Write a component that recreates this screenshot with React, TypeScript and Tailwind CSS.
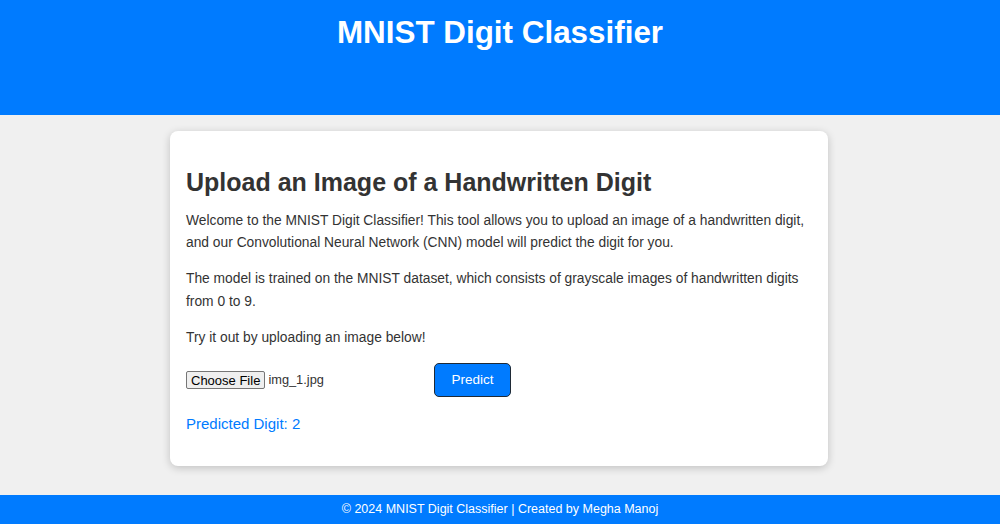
export default function App() {
  return (
    <div className="min-h-screen bg-[#f0f0f0] flex flex-col font-['Liberation_Sans',Arial,sans-serif] text-[#333]">
      {/* Header */}
      <header className="h-[115px] bg-[#007bff] text-white text-center pt-[14px]">
        <h1 className="text-[31.4px] font-bold leading-[37px]">MNIST Digit Classifier</h1>
      </header>

      {/* Main */}
      <main className="flex justify-center pt-4 pr-[2px]">
        <div className="w-[658px] h-[335px] bg-white rounded-lg shadow-[0_2px_8px_rgba(0,0,0,0.2)] px-4 pt-[37px]">
          <h2 className="text-[25px] font-bold leading-[29px] mb-[13px]">
            Upload an Image of a Handwritten Digit
          </h2>
          <p className="text-[13.8px] leading-[22.4px] mb-[13.5px]">
            Welcome to the MNIST Digit Classifier! This tool allows you to upload an image of a handwritten digit,
            and our Convolutional Neural Network (CNN) model will predict the digit for you.
          </p>
          <p className="text-[13.8px] leading-[22.4px] mb-[13.5px]">
            The model is trained on the MNIST dataset, which consists of grayscale images of handwritten digits
            from 0 to 9.
          </p>
          <p className="text-[13.8px] leading-[22.4px]">Try it out by uploading an image below!</p>

          <form className="flex items-center mt-[14px]" onSubmit={(e) => e.preventDefault()}>
            <div className="w-[248px] flex items-center">
              <button
                type="button"
                className="h-[18px] px-[4px] bg-[#efefef] border border-[#767676] rounded-[2px] text-[13px] leading-none text-black"
              >
                Choose File
              </button>
              <span className="ml-[3px] text-[12.8px] text-[#333]">img_1.jpg</span>
            </div>
            <button
              type="submit"
              className="h-[34px] w-[77px] bg-[#007bff] text-white text-[13.5px] rounded-[5px] border-[1.5px] border-[#1f2a36]"
            >
              Predict
            </button>
          </form>

          <p className="mt-[18px] text-[15px] leading-[18px] text-[#007bff]">Predicted Digit: 2</p>
        </div>
      </main>

      {/* Footer */}
      <footer className="mt-auto h-[29px] bg-[#007bff] text-white text-[12.5px] flex items-center justify-center">
        © 2024 MNIST Digit Classifier | Created by Megha Manoj
      </footer>
    </div>
  );
}
